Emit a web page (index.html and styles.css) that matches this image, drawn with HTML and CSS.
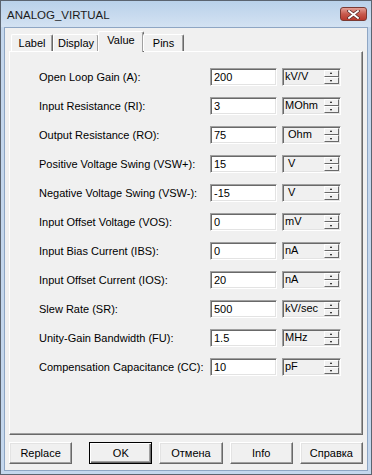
FILE: index.html
```html
<!DOCTYPE html>
<html lang="en">
    <head>
        <meta charset="UTF-8">
        <title>ANALOG_VIRTUAL</title>
        <link rel="stylesheet" href="styles.css">
    </head>
    <body>
        <div class="window">
            <div class="titlebar">
                <span class="title">ANALOG_VIRTUAL</span>
                <div class="close-btn">
                    <svg width="13" height="9" viewBox="0 0 13 9">
                        <path d="M2 1 L11 8 M11 1 L2 8" stroke="#5a2a2a" stroke-width="3.4" stroke-linecap="square"/>
                        <path d="M2 1 L11 8 M11 1 L2 8" stroke="#fff" stroke-width="1.8" stroke-linecap="square"/>
                    </svg>
                </div>
            </div>

            <div class="client">
                <div class="tabs">
                    <div class="tab tab-label">Label</div>
                    <div class="tab tab-display">Display</div>
                    <div class="tab tab-value active">Value</div>
                    <div class="tab tab-pins">Pins</div>
                </div>

                <div class="panel">
                    <div class="row">
                        <span class="label">Open Loop Gain (A):</span>
                        <div class="field">200</div>
                        <div class="unit"><span class="unit-text">kV/V</span><div class="spin"><i class="up"></i><i class="down"></i></div></div>
                    </div>
                    <div class="row">
                        <span class="label">Input Resistance (RI):</span>
                        <div class="field">3</div>
                        <div class="unit"><span class="unit-text">MOhm</span><div class="spin"><i class="up"></i><i class="down"></i></div></div>
                    </div>
                    <div class="row">
                        <span class="label">Output Resistance (RO):</span>
                        <div class="field">75</div>
                        <div class="unit"><span class="unit-text">&nbsp;Ohm</span><div class="spin"><i class="up"></i><i class="down"></i></div></div>
                    </div>
                    <div class="row">
                        <span class="label">Positive Voltage Swing (VSW+):</span>
                        <div class="field">15</div>
                        <div class="unit"><span class="unit-text">&nbsp;V</span><div class="spin"><i class="up"></i><i class="down"></i></div></div>
                    </div>
                    <div class="row">
                        <span class="label">Negative Voltage Swing (VSW-):</span>
                        <div class="field">-15</div>
                        <div class="unit"><span class="unit-text">&nbsp;V</span><div class="spin"><i class="up"></i><i class="down"></i></div></div>
                    </div>
                    <div class="row">
                        <span class="label">Input Offset Voltage (VOS):</span>
                        <div class="field">0</div>
                        <div class="unit"><span class="unit-text">mV</span><div class="spin"><i class="up"></i><i class="down"></i></div></div>
                    </div>
                    <div class="row">
                        <span class="label">Input Bias Current (IBS):</span>
                        <div class="field">0</div>
                        <div class="unit"><span class="unit-text">nA</span><div class="spin"><i class="up"></i><i class="down"></i></div></div>
                    </div>
                    <div class="row">
                        <span class="label">Input Offset Current (IOS):</span>
                        <div class="field">20</div>
                        <div class="unit"><span class="unit-text">nA</span><div class="spin"><i class="up"></i><i class="down"></i></div></div>
                    </div>
                    <div class="row">
                        <span class="label">Slew Rate (SR):</span>
                        <div class="field">500</div>
                        <div class="unit"><span class="unit-text">kV/sec</span><div class="spin"><i class="up"></i><i class="down"></i></div></div>
                    </div>
                    <div class="row">
                        <span class="label">Unity-Gain Bandwidth (FU):</span>
                        <div class="field">1.5</div>
                        <div class="unit"><span class="unit-text">MHz</span><div class="spin"><i class="up"></i><i class="down"></i></div></div>
                    </div>
                    <div class="row">
                        <span class="label">Compensation Capacitance (CC):</span>
                        <div class="field">10</div>
                        <div class="unit"><span class="unit-text">pF</span><div class="spin"><i class="up"></i><i class="down"></i></div></div>
                    </div>
                </div>

                <div class="buttons">
                    <div class="btn btn-replace">Replace</div>
                    <div class="btn default">OK</div>
                    <div class="btn">Отмена</div>
                    <div class="btn">Info</div>
                    <div class="btn">Справка</div>
                </div>
            </div>
        </div>
    </body>
</html>
```

FILE: styles.css
```css
body {
    margin: 0;
    width: 372px;
    height: 475px;
    font-family: "Liberation Sans", Arial, sans-serif;
    font-size: 11px;
    color: #000;
    background-color: #fff;
}

.window {
    box-sizing: border-box;
    width: 372px;
    height: 475px;
    border: 1px solid #5b6470;
    background-color: #c4d7ed;
    padding: 0 3px 3px 3px;
    display: flex;
    flex-direction: column;
}

.titlebar {
    height: 26px;
    margin: 0 -3px;
    padding: 0 4px 0 6px;
    display: flex;
    align-items: flex-start;
    justify-content: space-between;
    background: linear-gradient(to bottom, #b9d1ea, #c9dbef 60%, #d3e2f2);
}

.title {
    margin-top: 8px;
    font-size: 11.5px;
    color: #1b1b1b;
}

.close-btn {
    box-sizing: border-box;
    width: 27px;
    height: 14px;
    margin-top: 6px;
    border: 1px solid #7a3a33;
    border-radius: 3px;
    background: linear-gradient(to bottom, #e4a096, #c85a4d 50%, #b8392c);
    display: flex;
    align-items: center;
    justify-content: center;
}

.client {
    flex: 1;
    border: 1px solid #8ea6c4;
    background-color: #f0f0f0;
    padding: 3px 4px 6px 4px;
    display: flex;
    flex-direction: column;
}

.tabs {
    display: flex;
    align-items: flex-end;
    height: 20px;
    padding-left: 2px;
    position: relative;
    z-index: 1;
}

.tab {
    box-sizing: border-box;
    height: 17px;
    border: 1px solid #fff;
    border-right-color: #696969;
    border-bottom: none;
    border-radius: 2px 2px 0 0;
    box-shadow: inset -1px 0 #a0a0a0;
    text-align: center;
    line-height: 16px;
    background-color: #f0f0f0;
}

.tab-label {
    width: 42px;
}

.tab-display {
    width: 46px;
}

.tab-pins {
    width: 41px;
}

.tab.active {
    width: 46px;
    height: 21px;
    margin: 0 -1px -1px -1px;
}

.panel {
    box-sizing: border-box;
    height: 384px;
    border: 1px solid #fff;
    border-right-color: #696969;
    border-bottom-color: #696969;
    box-shadow: inset -1px -1px #a0a0a0;
    padding: 16px 0 0 29px;
    display: flex;
    flex-direction: column;
    gap: 11px;
}

.row {
    display: grid;
    grid-template-columns: 166px 67px 59px;
    column-gap: 5px;
    align-items: center;
    height: 18px;
}

.field,
.unit {
    box-sizing: border-box;
    height: 18px;
    border: 1px solid #a0a0a0;
    border-right-color: #fff;
    border-bottom-color: #fff;
    box-shadow: inset 1px 1px #696969, inset -1px -1px #e3e3e3;
    line-height: 16px;
    padding-left: 3px;
}

.field {
    background-color: #fff;
}

.unit {
    background-color: #f0f0f0;
    display: flex;
    justify-content: space-between;
    padding: 0 1px 0 2px;
}

.unit-text {
    line-height: 15px;
}

.spin {
    display: flex;
    flex-direction: column;
    width: 15px;
    margin-top: 1px;
}

.spin i {
    box-sizing: border-box;
    display: block;
    height: 7px;
    border: 1px solid #fff;
    border-right-color: #696969;
    border-bottom-color: #696969;
    background-color: #f0f0f0;
    position: relative;
}

.spin .up::after,
.spin .down::after {
    content: "";
    position: absolute;
    left: 5px;
    width: 0;
    height: 0;
    border-left: 1.5px solid transparent;
    border-right: 1.5px solid transparent;
}

.spin .up::after {
    top: 1px;
    border-bottom: 2px solid #000;
}

.spin .down::after {
    top: 2px;
    border-top: 2px solid #000;
}

.buttons {
    display: flex;
    gap: 7px;
    margin-top: 7px;
}

.btn {
    box-sizing: border-box;
    width: 64px;
    height: 22px;
    border: 1px solid #fff;
    border-right-color: #696969;
    border-bottom-color: #696969;
    box-shadow: inset -1px -1px #a0a0a0, inset 1px 1px #e3e3e3;
    text-align: center;
    line-height: 20px;
}

.btn-replace {
    margin-right: 10px;
}

.btn.default {
    border-color: #000;
    box-shadow: inset 1px 1px #fff, inset -1px -1px #696969, inset -2px -2px #a0a0a0;
}
```
